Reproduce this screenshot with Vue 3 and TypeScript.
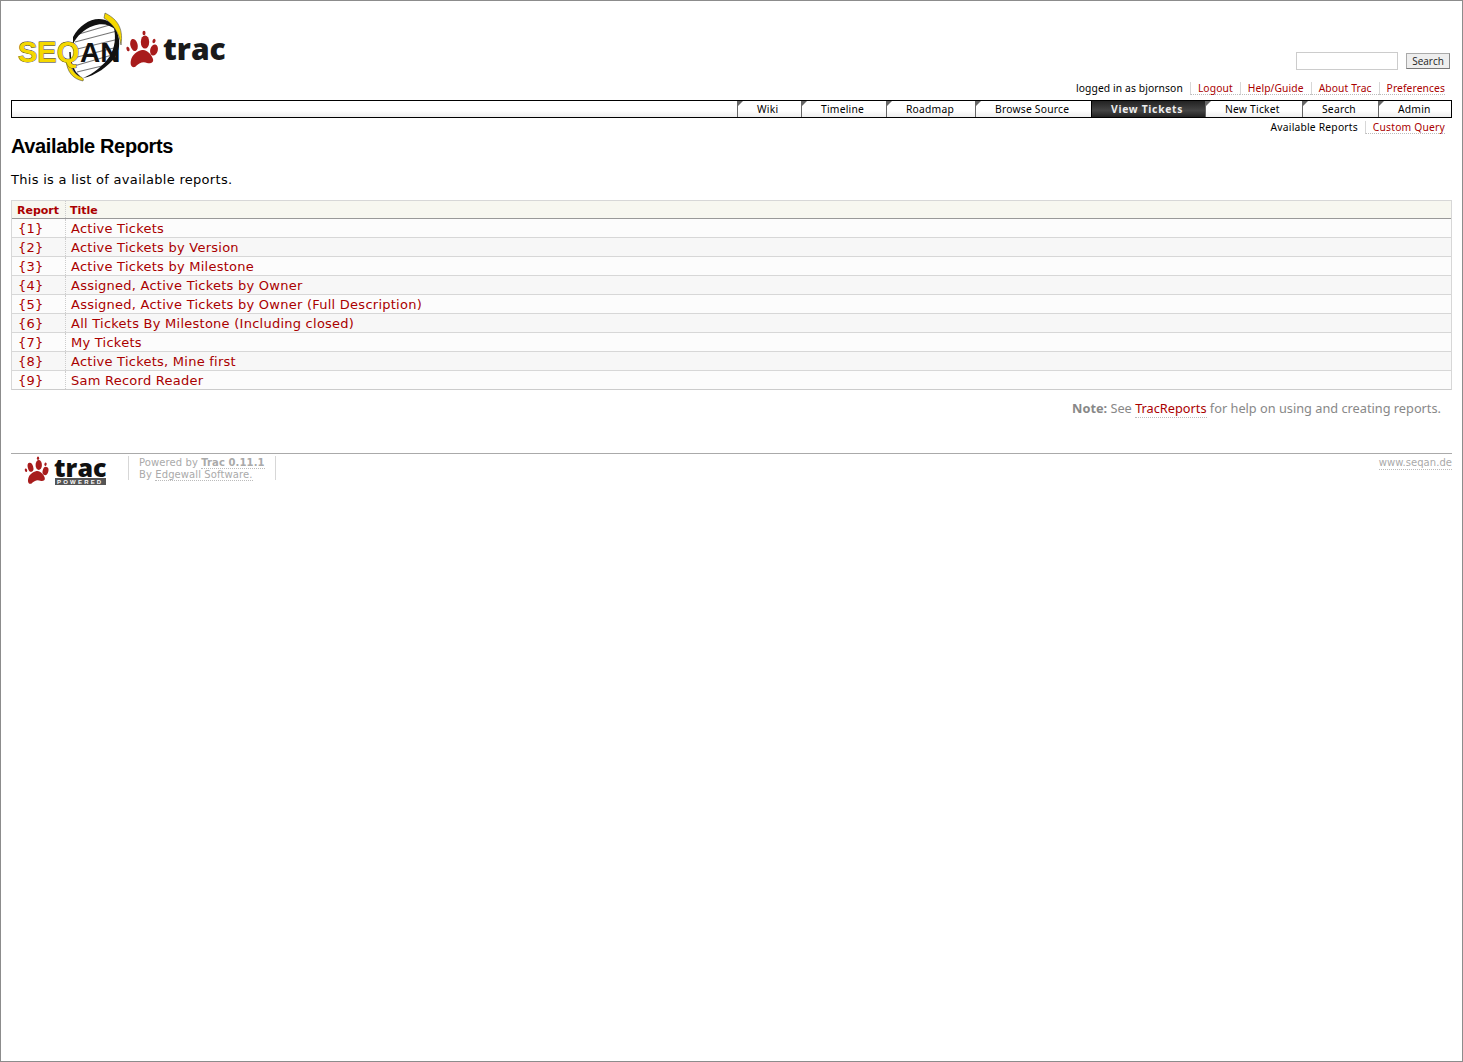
<script setup lang="ts">
const meta = ['Logout', 'Help/Guide', 'About Trac', 'Preferences']
const nav = [
  { label: 'Wiki', width: 64 },
  { label: 'Timeline', width: 85 },
  { label: 'Roadmap', width: 89 },
  { label: 'Browse Source', width: 116 },
  { label: 'View Tickets', width: 114 },
  { label: 'New Ticket', width: 97 },
  { label: 'Search', width: 76 },
  { label: 'Admin', width: 73 },
]
const reports = [
  'Active Tickets',
  'Active Tickets by Version',
  'Active Tickets by Milestone',
  'Assigned, Active Tickets by Owner',
  'Assigned, Active Tickets by Owner (Full Description)',
  'All Tickets By Milestone (Including closed)',
  'My Tickets',
  'Active Tickets, Mine first',
  'Sam Record Reader',
]
const toes = [
  [-10, -5, 3.6, 6.2, -15],
  [1, -8, 4.2, 6.6, 0],
  [10, 0, 3.8, 5.6, 15],
  [0, -17, 1.5, 2.2, 0],
  [-16, -1, 1.5, 2.4, -20],
  [10, -9, 1.5, 2.2, 20],
]
const pad = 'M-2 0C3-1 8 5 9 9C10 13 6 14 3 13C-1 11-5 13-9 17C-13 18-14 14-13 10C-12 5-7 1-2 0Z'
</script>

<template>
  <div class="page">
    <header class="banner">
      <svg class="logo" width="212" height="72" viewBox="0 0 212 72" aria-label="SEQAN trac logo">
        <path d="M56 25C62 14 72 7 82 7C92 7 100 14 103 32C104 42 96 52 84 60C76 65 68 67 63 65C55 62 50 42 56 25Z" fill="#fff" />
        <g stroke="#777" stroke-width="1.2" fill="none">
          <path d="M62 22L96 12M58 30L100 19M56 38L102 27M56 46L101 35M57 54L95 43M60 60L85 54" />
        </g>
        <path d="M56 25C62 14 72 7 82 7C90 7 96 11 99 18C92 12 84 11 76 14C67 17 60 24 56 32Z" fill="#111" />
        <path d="M99 18C103 26 104 36 98 45C92 54 78 64 66 66C76 62 87 53 93 44C98 35 99 26 97 16Z" fill="#111" />
        <path d="M53 40C53 52 56 60 63 65" fill="none" stroke="#111" stroke-width="1.4" />
        <path d="M88 1C98 6 107 14 104 33C102 20 96 12 87 6Z" fill="#f5d800" stroke="#333" stroke-width=".5" />
        <path d="M49 48C50 60 56 67 66 69C67 67 66 66 64 65C57 62 53 56 53 48Z" fill="#f5d800" stroke="#333" stroke-width=".5" />
        <text x="1" y="50" class="seq">SEQ</text>
        <text x="63" y="50" class="an">AN</text>
        <g transform="translate(127 38)" fill="#a81c1c">
          <ellipse v-for="(p, i) in toes" :key="i" :cx="p[0]" :cy="p[1]" :rx="p[2]" :ry="p[3]" :transform="`rotate(${p[4]} ${p[0]} ${p[1]})`" />
          <path :d="pad" />
        </g>
        <text x="146" y="48" class="trac">trac</text>
      </svg>
      <div class="search">
        <input class="search-input" type="text" />
        <button class="search-btn" type="button">Search</button>
      </div>
    </header>

    <nav class="metanav">
      <span class="meta-item user">logged in as bjornson</span>
      <a v-for="m in meta" :key="m" class="meta-item link">{{ m }}</a>
    </nav>

    <nav class="mainnav">
      <a
        v-for="n in nav"
        :key="n.label"
        class="tab"
        :class="{ active: n.label === 'View Tickets' }"
        :style="{ width: n.width + 'px' }"
      >{{ n.label }}</a>
    </nav>

    <nav class="ctxtnav">
      <span class="ctx-item">Available Reports</span>
      <a class="ctx-item link">Custom Query</a>
    </nav>

    <main class="content">
      <h1>Available Reports</h1>
      <p class="intro">This is a list of available reports.</p>
      <div class="table">
        <div class="row head">
          <div class="col-id">Report</div>
          <div class="col-title">Title</div>
        </div>
        <div v-for="(r, i) in reports" :key="r" class="row" :class="i % 2 ? 'even' : 'odd'">
          <div class="col-id">{{ '{' + (i + 1) + '}' }}</div>
          <div class="col-title">{{ r }}</div>
        </div>
      </div>
      <p class="note"><strong>Note:</strong> See <a class="link">TracReports</a> for help on using and creating reports.</p>
    </main>

    <footer class="footer">
      <div class="foot-logo">
        <svg class="foot-svg" width="84" height="32" viewBox="0 0 84 32" aria-label="Trac powered">
          <g transform="translate(14 15) scale(.75)" fill="#a81c1c">
            <ellipse v-for="(p, i) in toes" :key="i" :cx="p[0]" :cy="p[1]" :rx="p[2]" :ry="p[3]" :transform="`rotate(${p[4]} ${p[0]} ${p[1]})`" />
            <path :d="pad" />
          </g>
          <text x="30" y="21" class="foot-trac">trac</text>
          <rect x="31" y="22" width="51" height="7" fill="#555" />
          <text x="33" y="28" class="foot-pow">POWERED</text>
        </svg>
      </div>
      <div class="powered">
        <div>Powered by <a class="flink"><b>Trac 0.11.1</b></a></div>
        <div>By <a class="flink">Edgewall Software.</a></div>
      </div>
      <a class="flink site">www.seqan.de</a>
    </footer>
  </div>
</template>

<style>
html, body { margin: 0; background: #fff; }
</style>

<style scoped>
.page {
  box-sizing: border-box;
  height: 1062px;
  border: 1px solid #8c8c8c;
  padding: 0 10px;
  background: #fff;
  color: #000;
  font-family: "DejaVu Sans", Verdana, sans-serif;
  overflow: hidden;
}
.link { color: #a00; border-bottom: 1px dotted #bbb; }
.banner { display: flex; justify-content: space-between; height: 80px; padding-top: 11px; box-sizing: border-box; }
.logo { margin-left: 6px; }
.seq { font: 700 29px "Liberation Sans", sans-serif; fill: #f5d800; stroke: #333; stroke-width: .8px; paint-order: stroke; }
.an { font: 700 28px "Liberation Sans", sans-serif; fill: #111; }
.trac { font: 800 30px "Open Sans", sans-serif; fill: #1a1a1a; }
.search { display: flex; align-items: flex-start; margin: 40px 2px 0 0; }
.search-input { box-sizing: border-box; width: 102px; height: 18px; border: 1px solid #ccc; padding: 0; background: #fff; }
.search-btn {
  box-sizing: border-box; width: 44px; height: 16px; margin: 1px 0 0 8px; padding: 0;
  border: 1px solid #aaa; border-bottom-color: #777; border-right-color: #888;
  background: #eee; color: #222; font: 10px "Open Sans", sans-serif;
}
.metanav {
  display: flex; justify-content: flex-end; align-items: flex-start; box-sizing: border-box; height: 19px;
  padding: 1px 7px 0 0; font: 10.3px/15px "Noto Sans", sans-serif; letter-spacing: .1px;
}
.meta-item { padding: 0 7px; border-left: 1px solid #d7d7d7; line-height: 12px; height: 12px; }
.meta-item.user { border-left: 0; }
.meta-item:last-child { padding-right: 0; }
.mainnav {
  display: flex; justify-content: flex-end; height: 16px; border: 1px solid #000;
  background: linear-gradient(#fff 60%, #eee); font: 10.3px/17px "Noto Sans", sans-serif; letter-spacing: .22px;
}
.tab {
  position: relative; box-sizing: border-box; padding-left: 19px; border-left: 1px solid #666; color: #000; white-space: nowrap;
}
.tab::before {
  content: ""; position: absolute; left: 0; top: 0; width: 0; height: 0;
  border-top: 5px solid #666; border-right: 5px solid transparent;
}
.tab.active { background: linear-gradient(#222, #444 60%, #222); color: #eee; font-weight: 700; letter-spacing: .7px; border-left-color: #000; }
.tab.active::before { display: none; }
.ctxtnav {
  display: flex; justify-content: flex-end; box-sizing: border-box; height: 16px;
  padding: 3px 7px 0 0; font: 10.3px/13px "Noto Sans", sans-serif; letter-spacing: .2px;
}
.ctx-item { padding: 0 7px; height: 12px; line-height: 12px; }
.ctx-item + .ctx-item { border-left: 1px solid #d7d7d7; padding-right: 0; }
h1 { margin: 0; font: 700 20px/24px "Liberation Sans", sans-serif; letter-spacing: -.36px; }
.intro { margin: 13px 0 11px; font-size: 13px; line-height: 18px; letter-spacing: .3px; }
.table { border: 1px solid #d7d7d7; border-bottom-color: #ccc; font-size: 13px; letter-spacing: .25px; }
.row { display: flex; height: 18px; line-height: 20px; border-bottom: 1px solid #d7d7d7; }
.row:last-child { border-bottom: 0; }
.row.odd { background: #fcfcfc; }
.row.even { background: #f7f7f7; }
.row.head { height: 17px; line-height: 19px; background: #f7f7f0; border-bottom: 1px solid #999; color: #a00; font-size: 11px; font-weight: 700; letter-spacing: 0; }
.col-id { box-sizing: border-box; width: 54px; padding-left: 5px; border-right: 1px dotted #ccc; color: #a00; }
.row:not(.head) .col-id { padding-left: 6px; }
.col-title { padding-left: 4px; color: #a00; }
.row:not(.head) .col-title { padding-left: 5px; }
.note { margin: 10px 11px 0 0; text-align: right; font: 12.75px/16px "Noto Sans", sans-serif; color: #888; }
.footer {
  display: flex; align-items: flex-start; margin-top: 37px; padding-top: 2px;
  border-top: 1px solid #aaa; font-size: 10px; letter-spacing: .1px; color: #aaa;
}
.foot-logo { width: 118px; padding-left: 13px; box-sizing: border-box; border-right: 1px solid #d7d7d7; height: 24px; }
.foot-svg { overflow: visible; display: block; }
.foot-trac { font: 800 25px "Open Sans", sans-serif; fill: #111; }
.foot-pow { font: 700 6px "Liberation Sans", sans-serif; fill: #fff; letter-spacing: 2.2px; }
.powered { box-sizing: border-box; padding: 1px 10px 0; height: 24px; line-height: 12px; border-right: 1px solid #d7d7d7; }
.flink { color: #aaa; border-bottom: 1px dotted #bbb; }
.site { margin-left: auto; margin-top: 1px; line-height: 12px; letter-spacing: .05px; }
</style>
